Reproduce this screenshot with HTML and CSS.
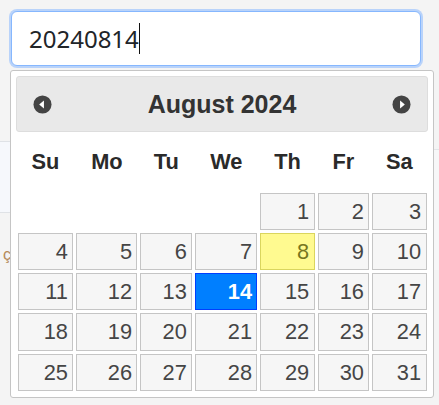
FILE: index.html
```html
<!DOCTYPE html>
<html lang="en">
<head>
<meta charset="utf-8">
<title>Datepicker</title>
<link rel="stylesheet" href="styles.css">
</head>
<body>
<div class="page">
  <div class="field">
    <div class="date-input"><span class="value">20240814</span><span class="caret"></span></div>
  </div>
  <div class="backdrop">
    <div class="bd-left">
      <div class="bd-row"></div>
      <div class="bd-text">ç</div>
    </div>
    <div class="bd-right"></div>
  </div>

  <div class="datepicker">
    <div class="dp-header">
      <a class="dp-nav" title="Prev">
        <svg viewBox="0 0 20 20" width="19" height="19"><circle cx="10" cy="10" r="9.5" fill="#444"/><polygon points="6.5,10 11.5,5.8 11.5,14.2" fill="#fff"/></svg>
      </a>
      <div class="dp-title">August 2024</div>
      <a class="dp-nav" title="Next">
        <svg viewBox="0 0 20 20" width="19" height="19"><circle cx="10" cy="10" r="9.5" fill="#444"/><polygon points="13.5,10 8.5,5.8 8.5,14.2" fill="#fff"/></svg>
      </a>
    </div>
    <table class="dp-cal">
      <thead>
        <tr><th>Su</th><th>Mo</th><th>Tu</th><th>We</th><th>Th</th><th>Fr</th><th>Sa</th></tr>
      </thead>
      <tbody>
        <tr><td></td><td></td><td></td><td></td><td><a class="day">1</a></td><td><a class="day">2</a></td><td><a class="day">3</a></td></tr>
        <tr><td><a class="day">4</a></td><td><a class="day">5</a></td><td><a class="day">6</a></td><td><a class="day">7</a></td><td><a class="day today">8</a></td><td><a class="day">9</a></td><td><a class="day">10</a></td></tr>
        <tr><td><a class="day">11</a></td><td><a class="day">12</a></td><td><a class="day">13</a></td><td><a class="day active">14</a></td><td><a class="day">15</a></td><td><a class="day">16</a></td><td><a class="day">17</a></td></tr>
        <tr><td><a class="day">18</a></td><td><a class="day">19</a></td><td><a class="day">20</a></td><td><a class="day">21</a></td><td><a class="day">22</a></td><td><a class="day">23</a></td><td><a class="day">24</a></td></tr>
        <tr><td><a class="day">25</a></td><td><a class="day">26</a></td><td><a class="day">27</a></td><td><a class="day">28</a></td><td><a class="day">29</a></td><td><a class="day">30</a></td><td><a class="day">31</a></td></tr>
      </tbody>
    </table>
  </div>
</div>
</body>
</html>
```
FILE: styles.css
```css
html, body {
  margin: 0;
  padding: 0;
}
body {
  background: #f4f4f4;
  font-family: "Liberation Sans", Arial, sans-serif;
}
.page {
  position: relative;
  height: 405px;
  overflow: hidden;
}
.field {
  padding: 11px 18px 0 11px;
}
.date-input {
  box-sizing: border-box;
  height: 55px;
  border: 1px solid #86b7fe;
  border-radius: 6px;
  box-shadow: 0 0 0 2px #b9d3fa;
  background: #fff;
  display: flex;
  align-items: center;
  padding-left: 17px;
  font-family: "Noto Sans", "Open Sans", sans-serif;
  font-size: 24px;
  color: #212529;
}
.caret {
  width: 1px;
  height: 31px;
  background: #111;
  margin-left: 0;
}
.backdrop {
  display: flex;
  justify-content: space-between;
}
.bd-left {
  width: 30px;
  margin-top: 75px;
}
.bd-row {
  height: 70px;
  border-top: 1px solid #dfe2e6;
  border-bottom: 1px solid #dfe2e6;
  background: #f6f8fc;
}
.bd-text {
  margin-top: 33px;
  padding-left: 3px;
  font-size: 16px;
  line-height: 18px;
  color: #b48a5a;
}
.bd-right {
  width: 20px;
  margin-top: 83px;
  border-top: 1px solid #e3e5e8;
  height: 120px;
  background: #f7f7f8;
}
.datepicker {
  position: absolute;
  left: 10px;
  top: 70px;
  width: 412px;
  padding: 5px 5px 0;
  border: 1px solid #c5c5c5;
  border-radius: 3px;
  background: #fff;
  color: #333;
}
.dp-header {
  height: 54px;
  border: 1px solid #ddd;
  border-radius: 3px;
  background: #e9e9e9;
  display: flex;
  align-items: center;
  justify-content: space-between;
  padding: 0 16px 0 16px;
}
.dp-nav {
  display: flex;
  width: 19px;
  height: 19px;
}
.dp-title {
  font-size: 25px;
  font-weight: bold;
  color: #333;
}
.dp-cal {
  width: 100%;
  border-collapse: collapse;
  font-size: 21.8px;
  margin: 0 0 5px;
}
.dp-cal th {
  padding: 17px 6.5px;
  font-weight: bold;
  text-align: center;
  line-height: 25px;
  color: #2a2a2a;
}
.dp-cal td {
  padding: 1.5px;
}
.day {
  display: block;
  padding: 5.15px 4.4px;
  line-height: 25px;
  text-align: right;
  border: 1px solid #c5c5c5;
  background: #f6f6f6;
  color: #454545;
}
.day.today {
  border-color: #dad55e;
  background: #fffa90;
  color: #777620;
}
.day.active {
  border-color: #003eff;
  background: #007fff;
  color: #fff;
  font-weight: bold;
}
```
